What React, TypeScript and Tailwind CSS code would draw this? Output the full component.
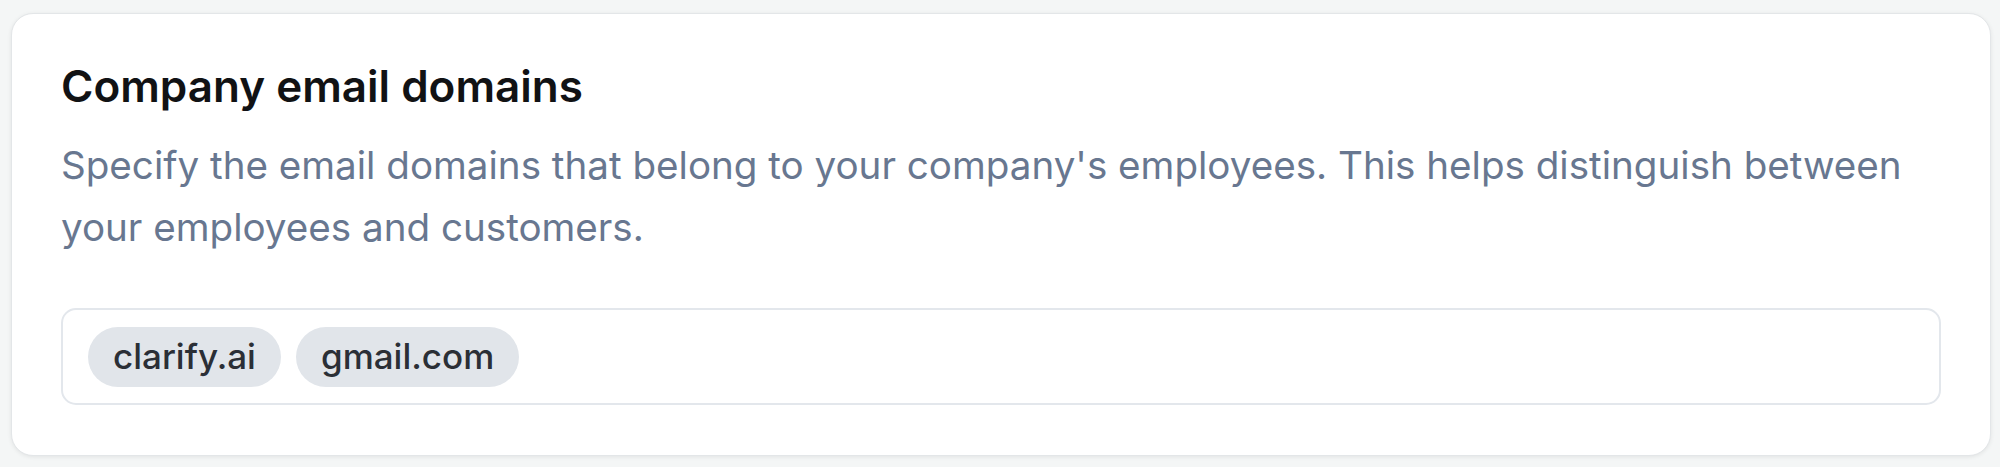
export default function App() {
  const tags = ["clarify.ai", "gmail.com"];
  return (
    <div
      className="min-h-[467px] w-full bg-[#f4f6f6] pl-[11px] pr-[9px] pt-[13px] pb-[12px]"
      style={{ fontFamily: "Inter, 'Noto Sans', sans-serif" }}
    >
      <div className="rounded-[22px] border border-[#e3e6e8] bg-white px-[49px] py-[50px] shadow-[0_1px_4px_rgba(0,0,0,0.08)]">
        <h2 className="text-[44px] leading-[44px] font-semibold text-[#111214]">
          Company email domains
        </h2>
        <p className="mt-[26px] text-[38.6px] leading-[62px] text-[#687790]">
          Specify the email domains that belong to your company's employees. This helps distinguish between your
          employees and customers.
        </p>
        <div className="mt-[50px] flex flex-wrap items-center gap-[15px] rounded-[15px] border-2 border-[#e3e7ec] px-[25px] py-[16.5px]">
          {tags.map((t) => (
            <span
              key={t}
              className="flex h-[60px] items-center rounded-full bg-[#e1e5ea] px-[25px] text-[35px] font-medium text-[#2b2f36]"
            >
              {t}
            </span>
          ))}
        </div>
      </div>
    </div>
  );
}
